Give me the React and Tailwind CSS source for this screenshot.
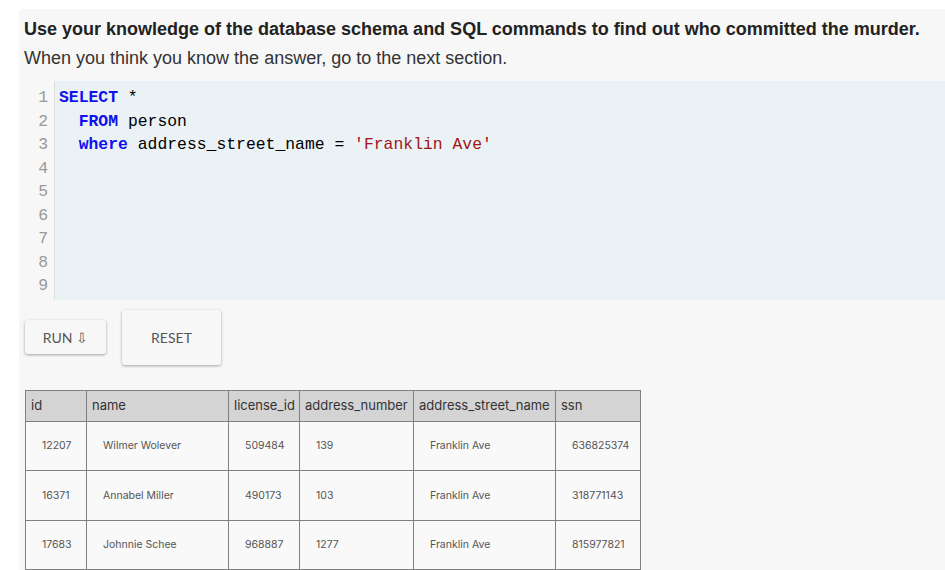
import React from 'react';

const codeLines = [
  [<span key="k" className="font-bold text-[#1010f0]">SELECT</span>, ' *'],
  ['  ', <span key="k" className="font-bold text-[#1010f0]">FROM</span>, ' person'],
  ['  ', <span key="k" className="font-bold text-[#1010f0]">where</span>, ' address_street_name = ', <span key="s" className="text-[#a11515]">'Franklin Ave'</span>],
  [], [], [], [], [], [],
];

const columns = [
  { name: 'id', w: 'w-[61px]' },
  { name: 'name', w: 'w-[142px]' },
  { name: 'license_id', w: 'w-[71px]' },
  { name: 'address_number', w: 'w-[114px]' },
  { name: 'address_street_name', w: 'w-[142px]' },
  { name: 'ssn', w: 'w-[85px]' },
];

const rows = [
  ['12207', 'Wilmer Wolever', '509484', '139', 'Franklin Ave', '636825374'],
  ['16371', 'Annabel Miller', '490173', '103', 'Franklin Ave', '318771143'],
  ['17683', 'Johnnie Schee', '968887', '1277', 'Franklin Ave', '815977821'],
];

function Editor() {
  return (
    <div className="flex mt-[12px] font-['Liberation_Mono',monospace] text-[16.4px] leading-[23.5px]">
      <div className="w-[36px] shrink-0 border-r border-[#dddddd] pt-[5px] pb-[2px] pr-[6px] text-right text-[#999999]">
        {codeLines.map((_, i) => (
          <div key={i}>{i + 1}</div>
        ))}
      </div>
      <div className="flex-1 bg-[#eaf2f5] pt-[5px] pb-[2px] pl-[4px] text-black whitespace-pre">
        {codeLines.map((parts, i) => (
          <div key={i} className="h-[23.5px]">{parts}</div>
        ))}
      </div>
    </div>
  );
}

function Buttons() {
  return (
    <div className="flex items-center gap-[16px] pl-[6px] mt-[10px] font-['Lato',sans-serif] text-[14px] text-[#555555]">
      <button className="w-[81px] h-[34px] rounded-[3px] bg-[#f7f7f7] shadow-[0_1px_3px_rgba(0,0,0,0.35)]">
        RUN ⇩
      </button>
      <button className="w-[99px] h-[55px] rounded-[3px] bg-[#f7f7f7] shadow-[0_1px_3px_rgba(0,0,0,0.35)]">
        RESET
      </button>
    </div>
  );
}

function Results() {
  return (
    <table className="ml-[6px] mt-[25px] w-[615px] table-fixed border-collapse font-['Inter',sans-serif] text-[#555555]">
      <thead>
        <tr className="h-[31px] bg-[#d4d4d4]">
          {columns.map((c) => (
            <th key={c.name} className={`${c.w} border border-[#808080] px-[5px] text-left text-[13px] font-normal whitespace-nowrap text-[#333333]`}>
              {c.name}
            </th>
          ))}
        </tr>
      </thead>
      <tbody>
        {rows.map((r) => (
          <tr key={r[0]} className="h-[49.6px] bg-[#f9f9f9]">
            {r.map((v, i) => (
              <td key={i} className="border border-[#808080] px-[16px] text-[10.5px] whitespace-nowrap">{v}</td>
            ))}
          </tr>
        ))}
      </tbody>
    </table>
  );
}

export default function App() {
  return (
    <div className="h-[570px] overflow-hidden bg-white pl-[19px] pt-[9px]">
      <div className="h-[600px] rounded-tl-[4px] bg-[#f7f7f7] font-['Liberation_Sans',Arial,sans-serif]">
        <div className="pl-[5px] pt-[9px] text-[#222222]">
          <h1 className="text-[18px] font-bold leading-[22px]">
            Use your knowledge of the database schema and SQL commands to find out who committed the murder.
          </h1>
          <p className="mt-[7px] text-[18px] leading-[22px] text-[#333333]">
            When you think you know the answer, go to the next section.
          </p>
        </div>
        <Editor />
        <Buttons />
        <Results />
      </div>
    </div>
  );
}
